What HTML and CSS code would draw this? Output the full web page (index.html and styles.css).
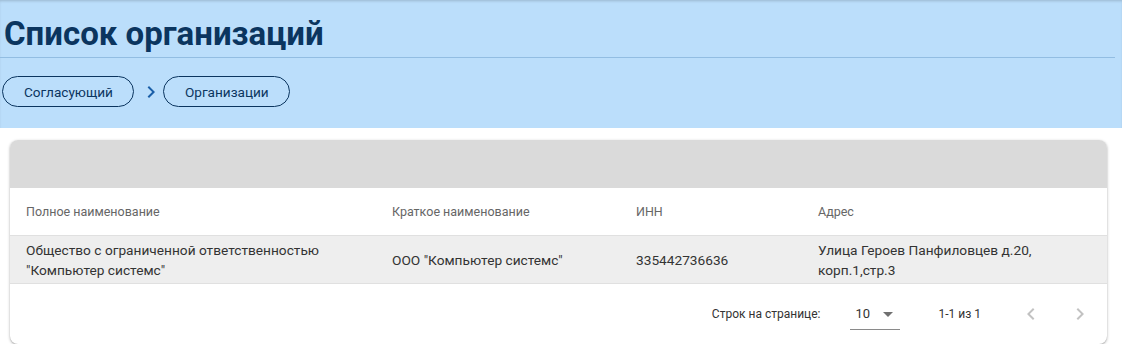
FILE: index.html
```html
<!DOCTYPE html>
<html lang="ru">
<head>
<meta charset="utf-8">
<title>Список организаций</title>
<link rel="stylesheet" href="styles.css">
</head>
<body>
<header class="page-header">
  <h1 class="title">Список организаций</h1>
  <nav class="crumbs">
    <span class="chip">Согласующий</span>
    <svg class="crumb-sep" width="24" height="24" viewBox="0 0 24 24"><path d="M8.59 16.59 13.17 12 8.59 7.41 10 6l6 6-6 6z"/></svg>
    <span class="chip">Организации</span>
  </nav>
</header>
<main class="main">
  <section class="card">
    <div class="toolbar"></div>
    <table class="grid">
      <colgroup>
        <col class="c1"><col class="c2"><col class="c3"><col>
      </colgroup>
      <thead>
        <tr>
          <th>Полное наименование</th>
          <th>Краткое наименование</th>
          <th>ИНН</th>
          <th>Адрес</th>
        </tr>
      </thead>
      <tbody>
        <tr class="row">
          <td>Общество с ограниченной ответственностью "Компьютер системс"</td>
          <td>ООО "Компьютер системс"</td>
          <td>335442736636</td>
          <td>Улица Героев Панфиловцев д.20, корп.1,стр.3</td>
        </tr>
      </tbody>
    </table>
    <div class="pager">
      <span class="caption">Строк на странице:</span>
      <div class="select">
        <span class="select-value">10</span>
        <svg class="caret" width="24" height="24" viewBox="0 0 24 24"><path d="M7 10l5 5 5-5z"/></svg>
      </div>
      <span class="caption range">1-1 из 1</span>
      <div class="actions">
        <span class="nav-btn"><svg width="24" height="24" viewBox="0 0 24 24"><path d="M15.41 16.09 10.83 11.5l4.58-4.59L14 5.5l-6 6 6 6z" transform="translate(0 .5)"/></svg></span>
        <span class="nav-btn"><svg width="24" height="24" viewBox="0 0 24 24"><path d="M8.59 16.59 13.17 12 8.59 7.41 10 6l6 6-6 6z"/></svg></span>
      </div>
    </div>
  </section>
</main>
</body>
</html>
```

FILE: styles.css
```css
html, body {
  margin: 0;
  padding: 0;
  background: #ffffff;
  font-family: Roboto, "Noto Sans", Arial, sans-serif;
  color: rgba(0, 0, 0, 0.87);
}

.page-header {
  background: #bbdefb;
  padding: 0 7px 21px 0;
  box-shadow: inset 0 2px 3px -1px rgba(0, 0, 0, 0.18);
}

.title {
  margin: 0;
  padding: 14px 0 3px 4px;
  font-size: 33px;
  line-height: 40px;
  font-weight: 700;
  color: #0b355f;
  border-bottom: 1px solid #92bde2;
}

.crumbs {
  display: flex;
  align-items: center;
  margin-top: 18px;
  padding-left: 2px;
}

.chip {
  display: inline-flex;
  align-items: center;
  box-sizing: border-box;
  height: 31px;
  padding: 0 20px 0 21px;
  border: 1px solid #0b355f;
  border-radius: 16px;
  font-size: 13.6px;
  color: #0b355f;
}

.crumb-sep {
  margin-left: 5px;
  fill: #1a5fa8;
}

.main {
  padding: 12px 15px 0 10px;
}

.card {
  background: #ffffff;
  border-radius: 8px;
  overflow: hidden;
  box-shadow: 0 1px 3px rgba(0, 0, 0, 0.3), 0 1px 1px rgba(0, 0, 0, 0.1);
}

.toolbar {
  height: 48px;
  background: #dadada;
}

.grid {
  width: 100%;
  border-collapse: collapse;
  table-layout: fixed;
}

.c1 { width: 366px; }
.c2 { width: 244px; }
.c3 { width: 182px; }

.grid th,
.grid td {
  text-align: left;
  padding: 0 16px;
  border-bottom: 1px solid #e0e0e0;
  vertical-align: middle;
}

.grid th {
  height: 47px;
  font-size: 12.5px;
  font-weight: 400;
  color: #666666;
}

.grid td {
  height: 47px;
  font-size: 13.7px;
  line-height: 20px;
  color: #333333;
}

.row {
  background: #eeeeee;
}

.pager {
  display: flex;
  justify-content: flex-end;
  align-items: center;
  height: 60px;
  padding-right: 3px;
}

.caption {
  font-size: 12px;
  color: #333333;
}

.select {
  display: flex;
  align-items: center;
  box-sizing: border-box;
  width: 50px;
  height: 32px;
  margin-left: 30px;
  padding-left: 5px;
  border-bottom: 1px solid #8a8a8a;
}

.select-value {
  font-size: 13px;
  color: #333333;
}

.caret {
  margin-left: auto;
  fill: #707070;
}

.range {
  margin-left: 38px;
}

.actions {
  display: flex;
  gap: 1px;
  margin-left: 26px;
}

.nav-btn {
  display: flex;
  justify-content: center;
  align-items: center;
  width: 48px;
  height: 48px;
}

.nav-btn svg {
  fill: #c2c2c2;
}
```
